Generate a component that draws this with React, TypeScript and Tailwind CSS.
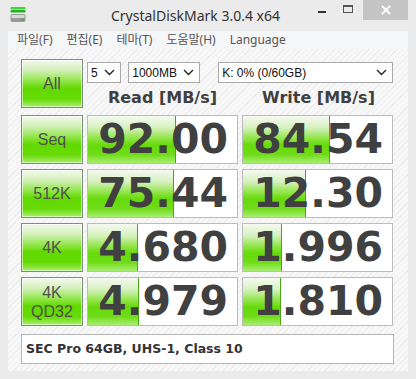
import React from 'react';

const rows = [
  { label: ['Seq'], read: '92.00', readBar: 88, write: '84.54', writeBar: 87 },
  { label: ['512K'], read: '75.44', readBar: 86, write: '12.30', writeBar: 63 },
  { label: ['4K'], read: '4.680', readBar: 50, write: '1.996', writeBar: 39 },
  { label: ['4K', 'QD32'], read: '4.979', readBar: 51, write: '1.810', writeBar: 38 },
];

const menus = ['파일(F)', '편집(E)', '테마(T)', '도움말(H)', 'Language'];

function Chevron() {
  return (
    <svg width="11" height="7" viewBox="0 0 11 7" className="shrink-0">
      <path d="M1 1 L5.5 5.5 L10 1" fill="none" stroke="#222" strokeWidth="1.4" />
    </svg>
  );
}

function Select({ value, width }: { value: string; width: string }) {
  return (
    <div
      className={`${width} h-[21px] bg-white border border-[#a9a9a9] flex items-center justify-between pl-[3px] pr-[5px] text-[12px] text-[#111] font-['Liberation_Sans',sans-serif]`}
    >
      <span>{value}</span>
      <Chevron />
    </div>
  );
}

function LabelButton({ lines }: { lines: string[] }) {
  return (
    <div className="h-[49px] border border-[#7d8f7a] bg-[linear-gradient(to_bottom,#f4f9ef_0%,#d3f0b8_22%,#8ee646_45%,#62d900_60%,#66da05_82%,#a6ef6c_100%)] shadow-[inset_0_0_0_1px_rgba(255,255,255,0.55)] flex flex-col items-center justify-center text-[16px] leading-[19px] text-[#505050] font-['Liberation_Sans',sans-serif]">
      {lines.map((l) => (
        <span key={l}>{l}</span>
      ))}
    </div>
  );
}

function ValueCell({ value, bar }: { value: string; bar: number }) {
  return (
    <div className="relative h-[49px] bg-white border border-[#bcbcbc] overflow-hidden">
      <div
        className="absolute left-0 top-0 bottom-0 border-r border-[#4aa818] bg-[linear-gradient(to_bottom,#f6faf2_0%,#d6f1be_25%,#8ee544_48%,#66da0a_62%,#70dc18_82%,#a8ee70_100%)]"
        style={{ width: bar }}
      />
      <div className="relative h-full flex items-center justify-end pr-[9px] text-[41px] font-bold text-[#404040] font-['DejaVu_Sans',sans-serif] leading-none">
        {value}
      </div>
    </div>
  );
}

export default function App() {
  return (
    <div className="w-[416px] h-[379px] bg-[#ebebeb] flex flex-col overflow-hidden">
      {/* title bar */}
      <div className="h-[31px] flex items-start shrink-0">
        <div className="w-[34px] pl-[10px] pt-[7px]">
          <svg width="16" height="16" viewBox="0 0 16 16">
            <rect x="0.5" y="0" width="15" height="2.5" rx="1" fill="#3fd43f" />
            <rect x="0.5" y="3" width="15" height="2.5" rx="1" fill="#22b022" />
            <rect x="0.5" y="7" width="15" height="8" rx="2" fill="#9a9a9a" />
            <rect x="1.5" y="8" width="13" height="3" rx="1" fill="#d8d8d8" />
            <rect x="11" y="11.5" width="3" height="2" fill="#38c038" />
          </svg>
        </div>
        <div className="flex-1 h-[31px] flex items-center justify-center pl-[48px] text-[14px] text-[#333] font-['Noto_Sans',sans-serif]">
          CrystalDiskMark 3.0.4 x64
        </div>
        <div className="flex items-start">
          <div className="w-[26px] h-[20px] flex items-center justify-center">
            <div className="w-[8px] h-[2px] bg-[#333] mt-[3px]" />
          </div>
          <div className="w-[26px] h-[20px] flex items-center justify-center">
            <div className="w-[10px] h-[8px] border border-[#555] border-t-2 mb-[2px]" />
          </div>
          <div className="w-[45px] h-[20px] bg-[#c4c4c4] mr-[8px] ml-[2px] flex items-center justify-center">
            <svg width="10" height="10" viewBox="0 0 10 10">
              <path d="M1 1 L9 9 M9 1 L1 9" stroke="#fff" strokeWidth="1.8" />
            </svg>
          </div>
        </div>
      </div>

      {/* menu */}
      <div className="mx-[8px] h-[18px] bg-[#f5f6f7] flex items-center gap-[10px] pl-[7px] text-[12px] text-[#555] font-['Noto_Sans','Noto_Sans_CJK_KR',sans-serif] shrink-0">
        {menus.map((m) => (
          <span key={m} className="px-[2px]">
            {m}
          </span>
        ))}
      </div>

      {/* content */}
      <div className="mx-[8px] mb-[8px] flex-1 bg-[repeating-linear-gradient(135deg,#f8f8f8_0px,#f8f8f8_3px,#ededed_3px,#ededed_4px)] pt-[10px] pl-[13px] pr-[13px]">
        <div className="grid grid-cols-[62px_151px_151px] gap-x-[4px] gap-y-[5px]">
          <LabelButton lines={['All']} />
          <div className="col-span-2 flex flex-col">
            <div className="flex mt-[3px] gap-[7px]">
              <Select value="5" width="w-[35px]" />
              <Select value="1000MB" width="w-[74px]" />
              <div className="w-[4px]" />
              <Select value="K: 0% (0/60GB)" width="w-[180px]" />
            </div>
            <div className="grid grid-cols-[151px_151px] gap-x-[5px] mt-[3px] text-[16px] font-bold text-[#404040] font-['DejaVu_Sans',sans-serif]">
              <div className="text-center">Read [MB/s]</div>
              <div className="text-center">Write [MB/s]</div>
            </div>
          </div>
          {rows.map((r) => (
            <React.Fragment key={r.label.join('')}>
              <LabelButton lines={r.label} />
              <ValueCell value={r.read} bar={r.readBar} />
              <ValueCell value={r.write} bar={r.writeBar} />
            </React.Fragment>
          ))}
        </div>
        <div className="mt-[8px] w-[373px] h-[30px] bg-white border border-[#b5b5b5] flex items-center pl-[4px] text-[12.5px] font-bold text-[#333] font-['DejaVu_Sans',sans-serif]">
          SEC Pro 64GB, UHS-1, Class 10
        </div>
      </div>
    </div>
  );
}
